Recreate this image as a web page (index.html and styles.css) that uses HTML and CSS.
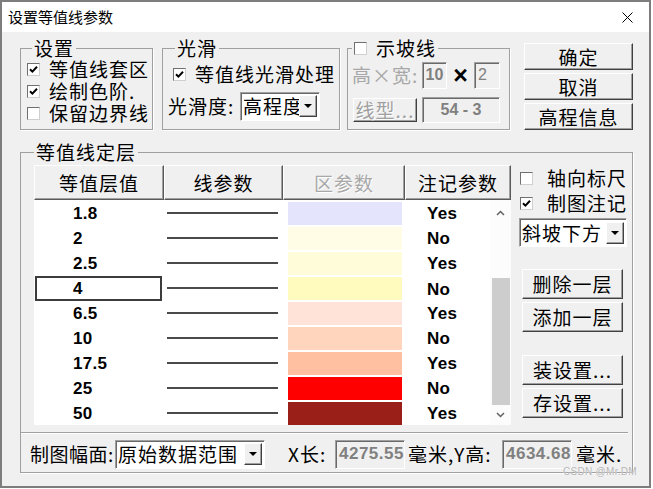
FILE: index.html
```html
<!DOCTYPE html>
<html lang="zh-CN">

<head>
  <meta charset="UTF-8">
  <title>设置等值线参数</title>
  <link rel="stylesheet" href="styles.css">
</head>

<body>
  <div class="dlg">
    <!-- 标题栏 -->
    <div class="titlebar">
      <span class="title">设置等值线参数</span>
      <svg class="close" width="11" height="11" viewBox="0 0 11 11">
        <path d="M0.5 0.5 L10.5 10.5 M10.5 0.5 L0.5 10.5" stroke="#000" stroke-width="1" fill="none" />
      </svg>
    </div>

    <div class="body">
      <!-- 上部：设置 / 光滑 / 示坡线 / 按钮 -->
      <div class="top">
        <fieldset class="grp g-set">
          <legend>设置</legend>
          <div class="chkrow">
            <span class="chk"><svg width="9" height="9" viewBox="0 0 9 9"><path d="M1 4.2 L3.4 6.6 L8 1.8" stroke="#000" stroke-width="2" fill="none" /></svg></span>
            <span>等值线套区</span>
          </div>
          <div class="chkrow">
            <span class="chk"><svg width="9" height="9" viewBox="0 0 9 9"><path d="M1 4.2 L3.4 6.6 L8 1.8" stroke="#000" stroke-width="2" fill="none" /></svg></span>
            <span>绘制色阶.</span>
          </div>
          <div class="chkrow">
            <span class="chk"></span>
            <span>保留边界线</span>
          </div>
        </fieldset>

        <fieldset class="grp g-smooth">
          <legend>光滑</legend>
          <div class="chkrow smooth-chk">
            <span class="chk"><svg width="9" height="9" viewBox="0 0 9 9"><path d="M1 4.2 L3.4 6.6 L8 1.8" stroke="#000" stroke-width="2" fill="none" /></svg></span>
            <span>等值线光滑处理</span>
          </div>
          <div class="smooth-row">
            <span class="lbl-smooth">光滑度:</span>
            <div class="combo combo-smooth">
              <span class="combo-txt">高程度</span>
              <span class="drop"><i></i></span>
            </div>
          </div>
        </fieldset>

        <fieldset class="grp g-slope">
          <legend><span class="lg-in"><span class="chk"></span><span>示坡线</span></span></legend>
          <div class="slope-row1">
            <span class="lbl-hw">高×宽:</span>
            <span class="field f-h">10</span>
            <span class="times">×</span>
            <span class="field f-w">2</span>
          </div>
          <div class="slope-row2">
            <button class="btn btn-type" disabled>线型...</button>
            <span class="field f-type">54 - 3</span>
          </div>
        </fieldset>

        <div class="btncol">
          <button class="btn">确定</button>
          <button class="btn">取消</button>
          <button class="btn">高程信息</button>
        </div>
      </div>

      <!-- 等值线定层 -->
      <fieldset class="grp g-layer">
        <legend>等值线定层</legend>
        <div class="layer-main">
          <div class="tbl">
            <div class="thead">
              <div class="th">等值层值</div>
              <div class="th">线参数</div>
              <div class="th th-off">区参数</div>
              <div class="th">注记参数</div>
            </div>
            <div class="tbody">
              <div class="rows">
                <div class="row">
                  <div class="c-val">1.8</div>
                  <div class="c-line"><i></i></div>
                  <div class="c-fill"><span class="sw" style="background:#e4e4fc"></span></div>
                  <div class="c-note">Yes</div>
                </div>
                <div class="row">
                  <div class="c-val">2</div>
                  <div class="c-line"><i></i></div>
                  <div class="c-fill"><span class="sw" style="background:#fffde6"></span></div>
                  <div class="c-note">No</div>
                </div>
                <div class="row">
                  <div class="c-val">2.5</div>
                  <div class="c-line"><i></i></div>
                  <div class="c-fill"><span class="sw" style="background:#fffcd9"></span></div>
                  <div class="c-note">Yes</div>
                </div>
                <div class="row sel">
                  <div class="c-val">4</div>
                  <div class="c-line"><i></i></div>
                  <div class="c-fill"><span class="sw" style="background:#fffbbf"></span></div>
                  <div class="c-note">No</div>
                </div>
                <div class="row">
                  <div class="c-val">6.5</div>
                  <div class="c-line"><i></i></div>
                  <div class="c-fill"><span class="sw" style="background:#ffe3d8"></span></div>
                  <div class="c-note">Yes</div>
                </div>
                <div class="row">
                  <div class="c-val">10</div>
                  <div class="c-line"><i></i></div>
                  <div class="c-fill"><span class="sw" style="background:#ffd5be"></span></div>
                  <div class="c-note">No</div>
                </div>
                <div class="row">
                  <div class="c-val">17.5</div>
                  <div class="c-line"><i></i></div>
                  <div class="c-fill"><span class="sw" style="background:#ffbfa1"></span></div>
                  <div class="c-note">Yes</div>
                </div>
                <div class="row">
                  <div class="c-val">25</div>
                  <div class="c-line"><i></i></div>
                  <div class="c-fill"><span class="sw" style="background:#ff0000"></span></div>
                  <div class="c-note">No</div>
                </div>
                <div class="row">
                  <div class="c-val">50</div>
                  <div class="c-line"><i></i></div>
                  <div class="c-fill"><span class="sw" style="background:#9a1f19"></span></div>
                  <div class="c-note">Yes</div>
                </div>
              </div>
              <!-- 滚动条 -->
              <div class="vsb">
                <div class="sb-up"><svg width="9" height="6" viewBox="0 0 9 6"><path d="M1 5 L4.5 1.5 L8 5" stroke="#606060" stroke-width="1.5" fill="none" /></svg></div>
                <div class="sb-thumb"></div>
                <div class="sb-down"><svg width="9" height="6" viewBox="0 0 9 6"><path d="M1 1 L4.5 4.5 L8 1" stroke="#606060" stroke-width="1.5" fill="none" /></svg></div>
              </div>
            </div>
          </div>

          <div class="side">
            <div class="chkrow side-chk1">
              <span class="chk"></span>
              <span>轴向标尺</span>
            </div>
            <div class="chkrow side-chk2">
              <span class="chk"><svg width="9" height="9" viewBox="0 0 9 9"><path d="M1 4.2 L3.4 6.6 L8 1.8" stroke="#000" stroke-width="2" fill="none" /></svg></span>
              <span>制图注记</span>
            </div>
            <div class="combo combo-side">
              <span class="combo-txt">斜坡下方</span>
              <span class="drop"><i></i></span>
            </div>
            <button class="btn side-btn btn-del">删除一层</button>
            <button class="btn side-btn">添加一层</button>
            <button class="btn side-btn btn-load">装设置...</button>
            <button class="btn side-btn">存设置...</button>
          </div>
        </div>

        <div class="sep"></div>

        <div class="bottom-row">
          <span class="lbl-range">制图幅面:</span>
          <div class="combo combo-range">
            <span class="combo-txt">原始数据范围</span>
            <span class="drop"><i></i></span>
          </div>
          <span class="lbl-x">X长:</span>
          <span class="field f-num">4275.55</span>
          <span class="lbl-y">毫米,Y高:</span>
          <span class="field f-num">4634.68</span>
          <span class="lbl-mm">毫米.</span>
        </div>
      </fieldset>
    </div>

    <div class="watermark">CSDN @Mr.DM</div>
  </div>
</body>

</html>
```

FILE: styles.css
```css
* {
  box-sizing: border-box;
}

body {
  margin: 0;
  background: #ffffff;
  font-family: "Noto Sans CJK SC", sans-serif;
}

/* 对话框外框 */
.dlg {
  position: relative;
  width: 651px;
  height: 488px;
  border: 2px solid #7d7d7d;
  background: #f0f0f0;
  color: #000;
  font-size: 19px;
  line-height: 20px;
  letter-spacing: 1px;
  white-space: nowrap;
  overflow: hidden;
}

.titlebar {
  height: 30px;
  background: #ffffff;
  display: flex;
  align-items: center;
  justify-content: space-between;
  padding: 0 16px 0 6px;
}

.title {
  font-size: 15px;
  letter-spacing: 0;
}

.body {
  padding: 6px 0 0 18px;
}

/* 分组框 */
.grp {
  margin: 0;
  padding: 0;
  min-width: 0;
  border: 1px solid #a0a0a0;
  box-shadow: 1px 1px 0 #ffffff;
}

.grp legend {
  padding: 0 2px;
  line-height: 20px;
}

.top {
  display: flex;
  height: 92px;
}

.g-set {
  width: 133px;
  margin-right: 9px;
  padding-left: 6px;
}

.g-set legend {
  margin-left: 5px;
}

.g-smooth {
  width: 178px;
  margin-right: 7px;
  padding-left: 5px;
}

.g-smooth legend {
  margin-left: 7px;
}

.g-slope {
  width: 163px;
  margin-right: 14px;
  padding-left: 4px;
}

.g-slope legend {
  margin-left: 0;
}

.lg-in {
  display: flex;
  align-items: center;
  gap: 9px;
}

/* 复选框 */
.chk {
  width: 13px;
  height: 13px;
  flex: none;
  background: #ffffff;
  border: 1px solid;
  border-color: #707070 #cfcfcf #cfcfcf #707070;
  display: inline-flex;
  align-items: center;
  justify-content: center;
}

.chkrow {
  display: flex;
  align-items: center;
  gap: 9px;
  height: 22px;
}

.smooth-chk {
  height: 32px;
  margin-left: 5px;
}

.smooth-row {
  display: flex;
  align-items: center;
  height: 32px;
}

.lbl-smooth {
  width: 72px;
}

/* 下拉框 */
.combo {
  display: flex;
  align-items: center;
  height: 29px;
  background: #ffffff;
  border: 1px solid;
  border-color: #a0a0a0 #ffffff #ffffff #a0a0a0;
  box-shadow: inset 1px 1px 0 #696969;
  padding: 0 2px 0 2px;
  flex: none;
}

.combo-txt {
  flex: 1;
  min-width: 0;
  overflow: hidden;
}

.drop {
  flex: none;
  width: 18px;
  height: 22px;
  background: #f0f0f0;
  border: 1px solid;
  border-color: #ffffff #404040 #404040 #ffffff;
  box-shadow: inset -1px -1px 0 #a0a0a0;
  display: flex;
  align-items: center;
  justify-content: center;
}

.drop i {
  width: 0;
  height: 0;
  border-left: 4px solid transparent;
  border-right: 4px solid transparent;
  border-top: 4px solid #000;
}

.combo-smooth {
  width: 80px;
}

/* 示坡线 */
.slope-row1 {
  display: flex;
  align-items: center;
  height: 34px;
}

.lbl-hw {
  width: 70px;
  color: #a8a8a8;
}

.field {
  display: flex;
  align-items: center;
  flex: none;
  background: #f0f0f0;
  border: 1px solid;
  border-color: #a0a0a0 #ffffff #ffffff #a0a0a0;
  box-shadow: inset 1px 1px 0 #696969;
  font-family: "Liberation Sans", Arial, sans-serif;
  color: #808080;
  letter-spacing: 0;
}

.f-h {
  width: 25px;
  height: 27px;
  justify-content: center;
  font-size: 16px;
  font-weight: bold;
}

.f-w {
  width: 26px;
  height: 27px;
  padding-left: 3px;
  font-size: 16px;
}

.times {
  width: 27px;
  text-align: center;
  font-family: "Liberation Sans", Arial, sans-serif;
  font-weight: bold;
  font-size: 25px;
  letter-spacing: 0;
}

.slope-row2 {
  display: flex;
  align-items: center;
  height: 30px;
  margin-top: 3px;
}

.f-type {
  width: 78px;
  height: 26px;
  justify-content: center;
  font-size: 16px;
  font-weight: bold;
}

/* 按钮 */
.btn {
  font: inherit;
  letter-spacing: inherit;
  color: #000;
  background: #f0f0f0;
  border: 1px solid;
  border-color: #ffffff #404040 #404040 #ffffff;
  box-shadow: inset -1px -1px 0 #a0a0a0;
  padding: 0;
  display: flex;
  align-items: center;
  justify-content: center;
}

.btn:disabled {
  color: #a0a0a0;
  text-shadow: 1px 1px 0 #ffffff;
}

.btn-type {
  width: 64px;
  height: 24px;
  margin: 0 5px 0 1px;
}

.btncol {
  display: flex;
  flex-direction: column;
  gap: 3px;
  width: 109px;
  margin-top: 5px;
}

.btncol .btn {
  height: 29px;
}

/* 等值线定层 */
.g-layer {
  width: 613px;
  margin-top: 12px;
  padding: 0 0 3px 13px;
}

.g-layer legend {
  margin-left: 0;
}

.layer-main {
  display: flex;
  margin-top: 3px;
}

.tbl {
  width: 477px;
}

.thead {
  display: grid;
  grid-template-columns: 130px 119px 122px 106px;
  height: 35px;
}

.th {
  display: flex;
  align-items: center;
  justify-content: center;
  background: #f0f0f0;
  border: 1px solid;
  border-color: #ffffff #5a5a5a #5a5a5a #ffffff;
  box-shadow: inset -1px -1px 0 #a0a0a0;
}

.th-off {
  color: #a8a8a8;
  text-shadow: 1px 1px 0 #ffffff;
}

.tbody {
  display: flex;
  height: 225px;
  background: #ffffff;
}

.rows {
  width: 456px;
}

.row {
  display: grid;
  grid-template-columns: 130px 119px 122px 85px;
  height: 25px;
}

.c-val,
.c-note {
  display: flex;
  align-items: center;
  padding-top: 3px;
  font-family: "Liberation Sans", Arial, sans-serif;
  font-weight: bold;
  font-size: 17px;
  letter-spacing: 0.3px;
}

.c-val {
  padding-left: 39px;
}

.c-note {
  padding-left: 22px;
}

.row.sel .c-val {
  margin: 1px 2px 0 1px;
  border: 2px solid #3c3c3c;
  padding-left: 36px;
  padding-top: 1px;
}

.c-line {
  display: flex;
  align-items: center;
  padding-left: 3px;
}

.c-line i {
  width: 111px;
  height: 2px;
  background: #4a4a4a;
}

.c-fill {
  padding: 2px 0 0 5px;
}

.sw {
  display: block;
  width: 114px;
  height: 23px;
}

/* 滚动条 */
.vsb {
  width: 21px;
  display: flex;
  flex-direction: column;
  background: #fcfcfc;
}

.sb-up {
  height: 25px;
  display: flex;
  align-items: center;
  justify-content: center;
  margin-bottom: 53px;
}

.sb-thumb {
  width: 18px;
  height: 127px;
  margin-left: 2px;
  background: #cdcdcd;
}

.sb-down {
  height: 20px;
  display: flex;
  align-items: center;
  justify-content: center;
}

/* 右侧控件 */
.side {
  width: 108px;
  margin-left: 8px;
  display: flex;
  flex-direction: column;
}

.side .chkrow {
  margin-left: 1px;
  gap: 14px;
}

.side-chk1 {
  height: 26px;
}

.side-chk2 {
  height: 24px;
}

.combo-side {
  margin-top: 3px;
  width: 108px;
}

.side-btn {
  width: 101px;
  height: 30px;
  margin: 3px 0 0 3px;
}

.btn-del {
  margin-top: 22px;
}

.btn-load {
  margin-top: 23px;
}

.sep {
  height: 2px;
  margin: 7px 4px 0 -13px;
  border-top: 1px solid #a0a0a0;
  border-bottom: 1px solid #ffffff;
}

/* 底部一行 */
.bottom-row {
  display: flex;
  align-items: center;
  height: 30px;
  margin: 5px 0 0 -4px;
}

.lbl-range {
  width: 85px;
  flex: none;
  letter-spacing: 0.5px;
}

.combo-range {
  width: 150px;
}

.lbl-x {
  width: 47px;
  flex: none;
  margin-left: 23px;
}

.f-num {
  width: 70px;
  height: 29px;
  padding-left: 3px;
  font-size: 17px;
  font-weight: bold;
  letter-spacing: 0.5px;
}

.lbl-y {
  width: 97px;
  flex: none;
  padding-left: 3px;
}

.lbl-mm {
  padding-left: 4px;
}

.watermark {
  position: absolute;
  right: 12px;
  bottom: 8px;
  font-family: "Liberation Sans", Arial, sans-serif;
  font-size: 10px;
  line-height: 12px;
  letter-spacing: 0.3px;
  color: #b4b4b4;
  text-shadow: 0 0 1px #ffffff;
}
```
